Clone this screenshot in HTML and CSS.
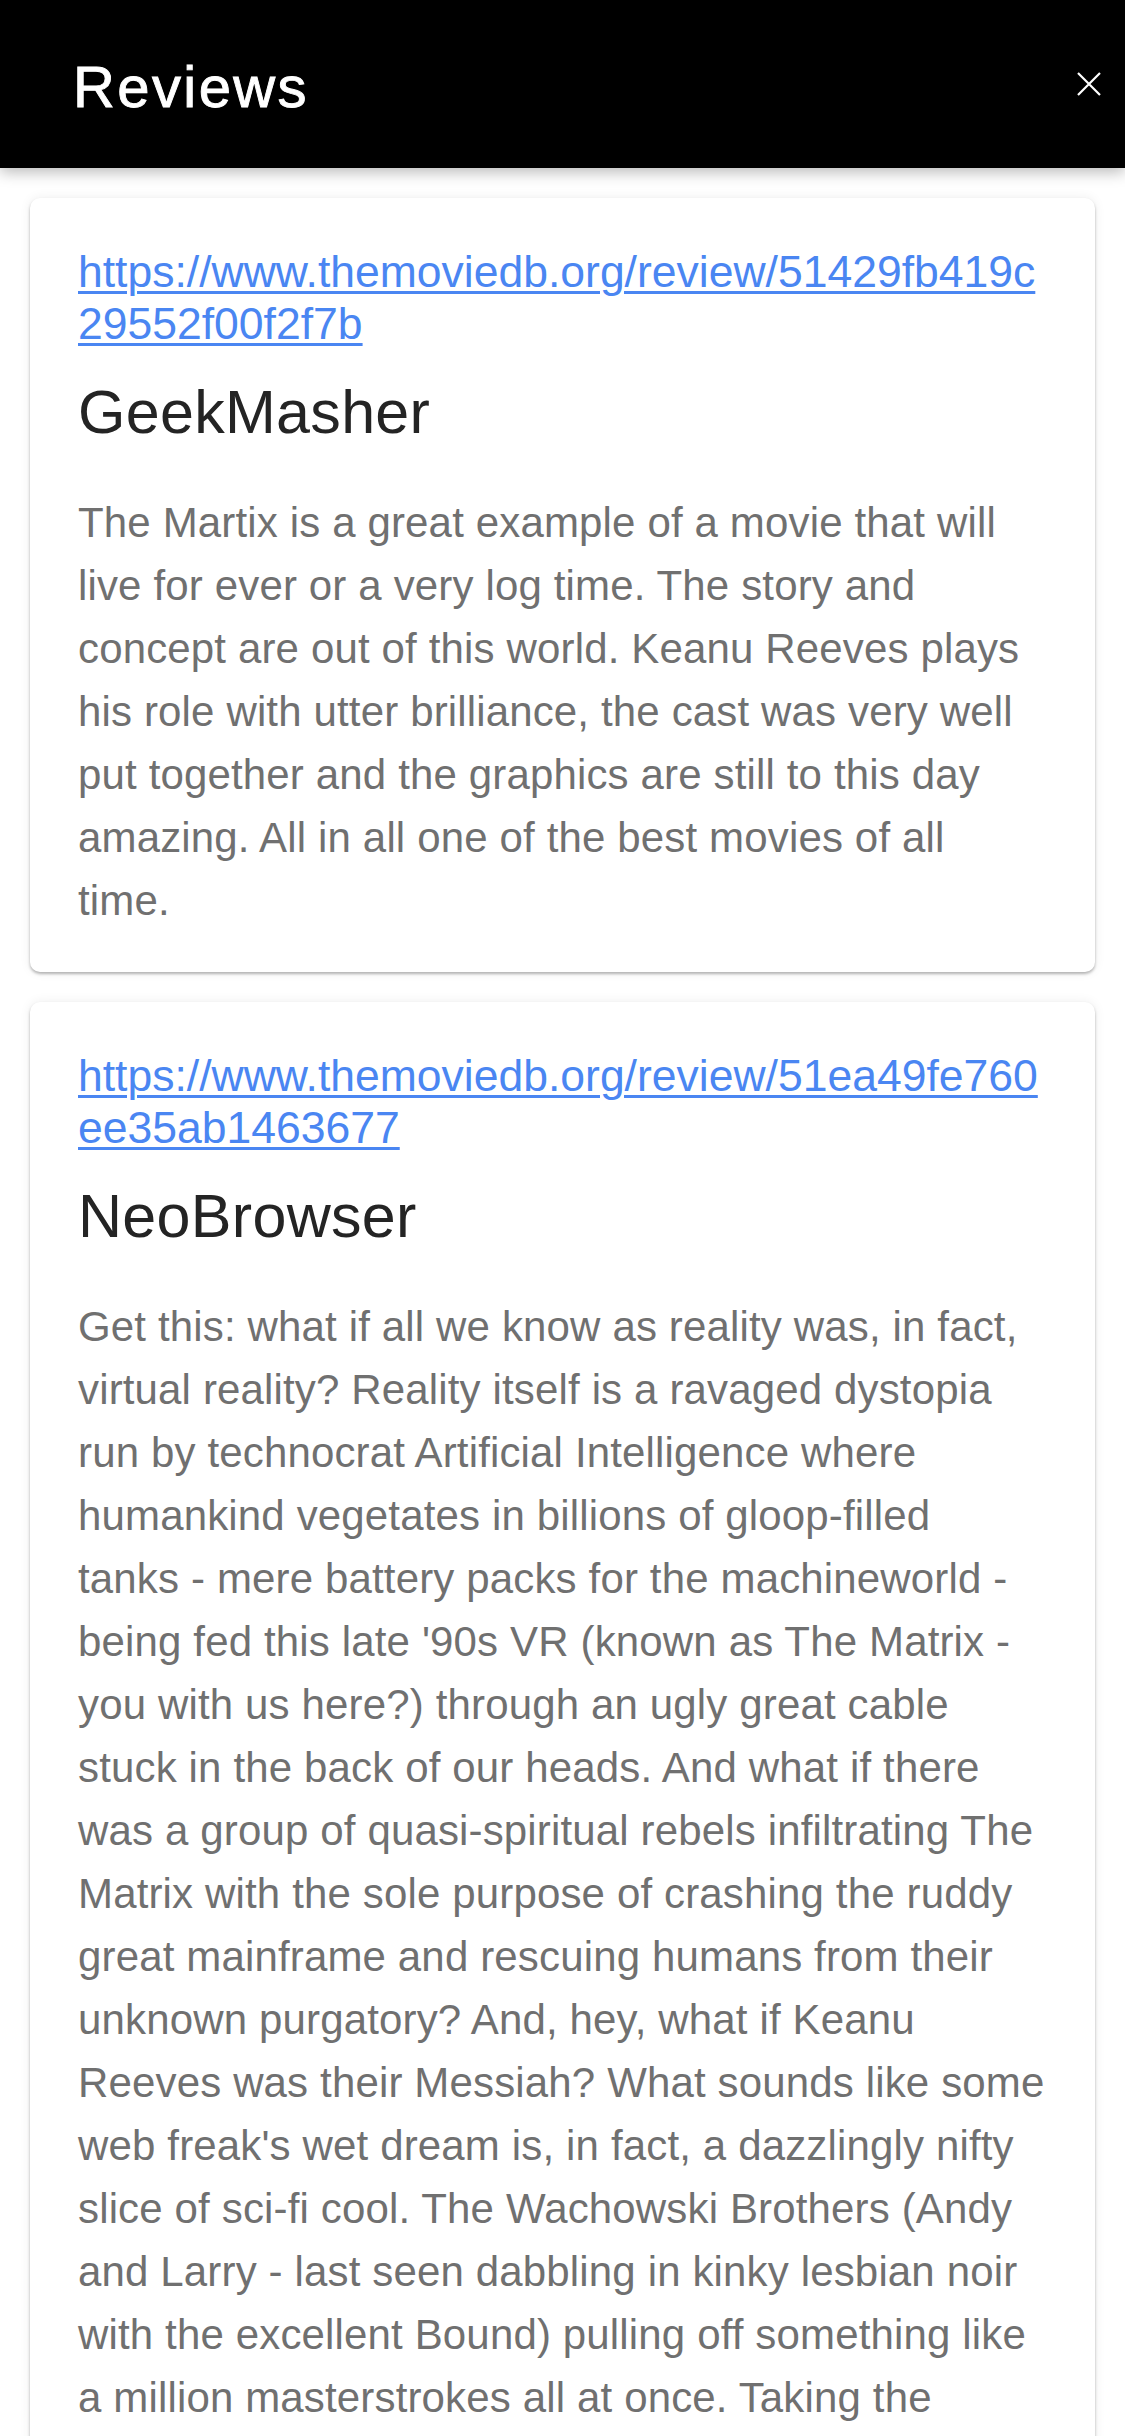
FILE: index.html
```html
<!DOCTYPE html>
<html lang="en">
<head>
<meta charset="utf-8">
<title>Reviews</title>
<link rel="stylesheet" href="styles.css">
</head>
<body>
<header class="topbar">
  <h1 class="topbar-title">Reviews</h1>
  <button class="close-btn" aria-label="Close">
    <svg viewBox="0 0 24 24" width="24" height="24"><path d="M1 1L23 23M23 1L1 23" stroke="#fff" stroke-width="2.2" fill="none"/></svg>
  </button>
</header>
<main class="review-list">
  <article class="review-card">
    <a class="review-link" href="#">https://www.themoviedb.org/review/51429fb419c29552f00f2f7b</a>
    <h2 class="review-author">GeekMasher</h2>
    <p class="review-text">The Martix is a great example of a movie that will live for ever or a very log time. The story and concept are out of this world. Keanu Reeves plays his role with utter brilliance, the cast was very well put together and the graphics are still to this day amazing. All in all one of the best movies of all time.</p>
  </article>
  <article class="review-card">
    <a class="review-link" href="#">https://www.themoviedb.org/review/51ea49fe760ee35ab1463677</a>
    <h2 class="review-author">NeoBrowser</h2>
    <p class="review-text">Get this: what if all we know as reality was, in fact, virtual reality? Reality itself is a ravaged dystopia run by technocrat Artificial Intelligence where humankind vegetates in billions of gloop-filled<br>tanks - mere battery packs for the machineworld - being fed this late '90s VR (known as The Matrix - you with us here?) through an ugly great cable stuck in the back of our heads. And what if there was a group of quasi-spiritual rebels infiltrating The Matrix with the sole purpose of crashing the ruddy great mainframe and rescuing humans from their unknown purgatory? And, hey, what if Keanu Reeves was their Messiah? What sounds like some web freak's wet dream is, in fact, a dazzlingly nifty slice of sci-fi cool. The Wachowski Brothers (Andy and Larry - last seen dabbling in kinky lesbian noir with the excellent Bound) pulling off something like a million masterstrokes all at once. Taking the</p>
  </article>
</main>
</body>
</html>
```
FILE: styles.css
```css
html, body {
  margin: 0;
  padding: 0;
  background: #ffffff;
  font-family: "Liberation Sans", Arial, Helvetica, sans-serif;
  scrollbar-width: none;
}
body::-webkit-scrollbar { display: none; }

.topbar {
  position: relative;
  z-index: 2;
  height: 168px;
  background: #000;
  display: flex;
  align-items: center;
  justify-content: space-between;
  padding: 0 24px 0 73px;
  box-sizing: border-box;
  box-shadow: 0 4px 14px rgba(0, 0, 0, 0.28);
}

.topbar-title {
  margin: 6px 0 0;
  color: #fff;
  font-size: 58px;
  font-weight: normal;
  line-height: 58px;
  letter-spacing: 2.4px;
  -webkit-text-stroke: 0.9px #fff;
}

.close-btn {
  width: 24px;
  height: 24px;
  padding: 0;
  border: 0;
  background: none;
  display: flex;
}

.review-list {
  display: flex;
  flex-direction: column;
  gap: 30px;
  padding: 30px 30px 0 30px;
}

.review-card {
  background: #fff;
  border-radius: 10px;
  padding: 48px 50px 40px 48px;
  box-shadow: 0 2px 3px rgba(0, 0, 0, 0.28), 0 0 12px rgba(0, 0, 0, 0.07);
}

.review-link {
  display: block;
  color: #4a86f2;
  font-size: 44.5px;
  line-height: 52px;
  word-break: break-all;
  text-decoration: underline;
  text-decoration-thickness: 3px;
  text-underline-offset: 4px;
}

.review-author {
  margin: 26px 0 43px;
  color: #242424;
  font-size: 61px;
  font-weight: normal;
  line-height: 72px;
  letter-spacing: 0.3px;
}

.review-text {
  margin: 0;
  color: #707070;
  font-size: 42px;
  line-height: 63px;
  letter-spacing: 0.15px;
}
```
